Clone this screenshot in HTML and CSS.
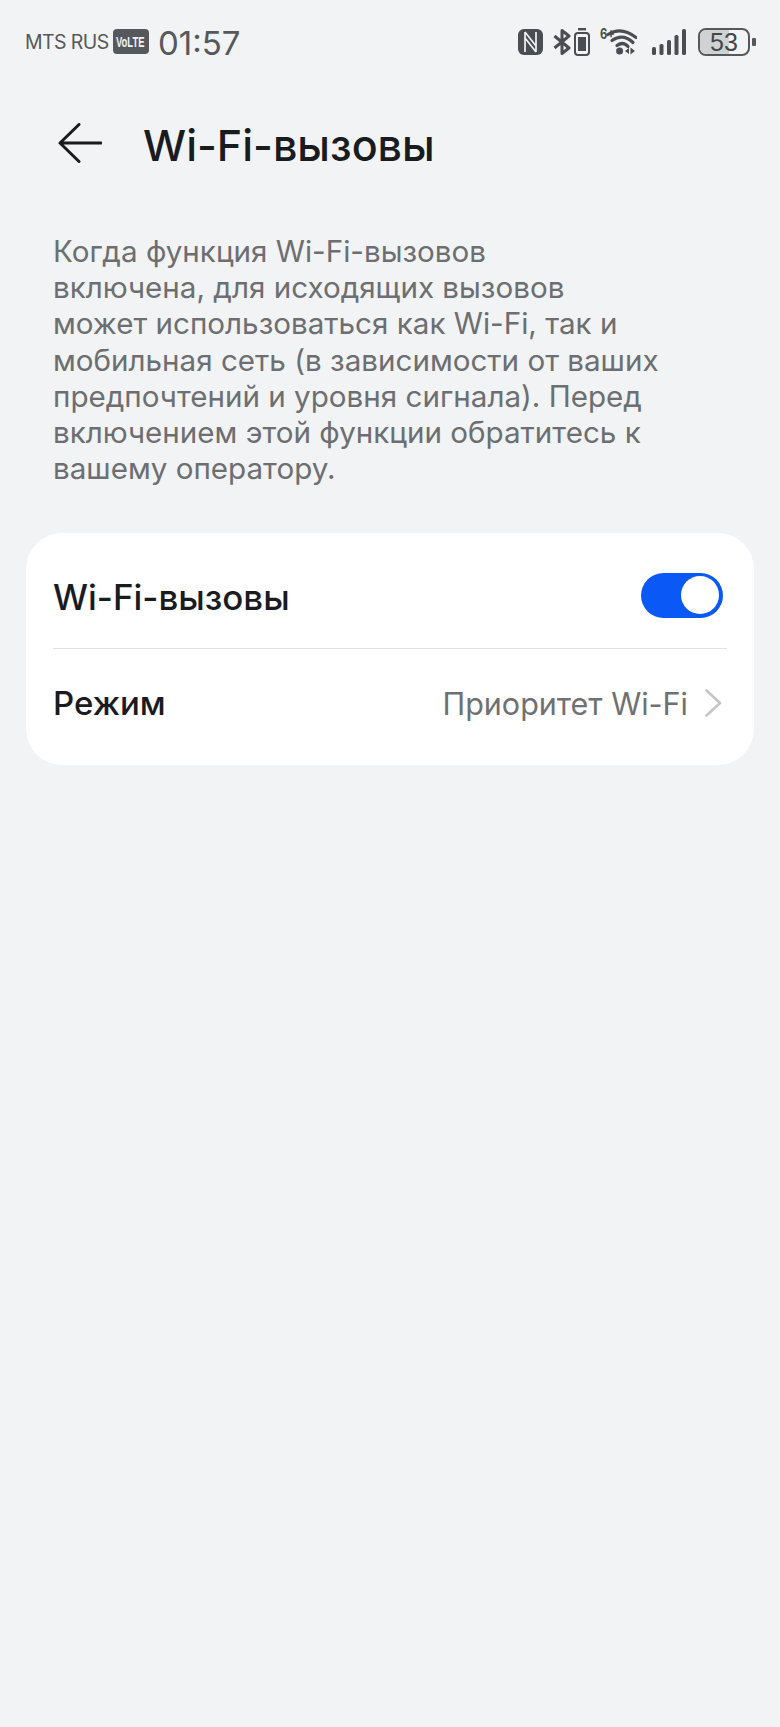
FILE: index.html
```html
<!DOCTYPE html>
<html lang="ru">
<head>
    <meta charset="UTF-8">
    <meta name="viewport" content="width=device-width, initial-scale=1.0">
    <title>Wi-Fi-вызовы</title>
    <link rel="stylesheet" href="styles.css">
</head>
<body>
    <div class="statusbar">
        <div class="status-left">
            <span class="carrier">MTS RUS</span>
            <svg class="volte" width="36" height="25" viewBox="0 0 36 25">
                <rect width="36" height="25" rx="4" fill="#55585c"/>
                <text class="volte-text" transform="translate(3 18) scale(0.63 1)">VoLTE</text>
            </svg>
            <span class="clock">01:57</span>
        </div>
        <div class="status-right">
            <!-- nfc -->
            <svg class="ic-nfc" width="25" height="26" viewBox="0 0 25 26">
                <rect width="25" height="26" rx="6" fill="#4a4d51"/>
                <path d="M7 3V23M18 3V23M7 3L18 17M7 9L18 23" fill="none" stroke="#f1f3f5" stroke-width="1.7"/>
            </svg>
            <!-- bluetooth -->
            <svg class="ic-bt" width="18" height="26" viewBox="0 0 18 26">
                <path d="M1.5 7L16 19L9 24.5V1.5L16 7L1.5 19" fill="none" stroke="#4a4d51" stroke-width="3" stroke-linejoin="round"/>
            </svg>
            <!-- headset battery -->
            <svg class="ic-bud" width="16" height="28" viewBox="0 0 16 28">
                <rect x="4" y="0" width="8" height="2.4" fill="#4a4d51"/>
                <rect x="1" y="5" width="14" height="22" rx="3" fill="none" stroke="#4a4d51" stroke-width="2"/>
                <rect x="4" y="9" width="8" height="14" fill="#4a4d51"/>
            </svg>
            <!-- wifi 6+ -->
            <svg class="ic-wifi" width="37" height="32" viewBox="0 -2 37 32">
                <text class="wifi-six" transform="translate(0 11) scale(0.8 1)">6+</text>
                <path d="M8 6.500Q21 -2 36 9.500" fill="none" stroke="#4a4d51" stroke-width="3.200" stroke-linecap="round"/>
                <path d="M12 12.500Q23 5 33 14.500" fill="none" stroke="#4a4d51" stroke-width="3.200" stroke-linecap="round"/>
                <path d="M17 17.500Q23 13 28 18.500" fill="none" stroke="#4a4d51" stroke-width="3.200" stroke-linecap="round"/>
                <circle cx="19.600" cy="23" r="3.500" fill="#4a4d51"/>
                <path d="M25 23L29 20V26ZM30.500 19.500V26.500L35 23Z" fill="#4a4d51"/>
            </svg>
            <!-- signal -->
            <svg class="ic-signal" width="34" height="26" viewBox="0 0 34 26" fill="#4a4d51">
                <rect x="0" y="18" width="4" height="8" rx="1.6"/>
                <rect x="7.5" y="15" width="4" height="11" rx="1.6"/>
                <rect x="15" y="11" width="4" height="15" rx="1.6"/>
                <rect x="22.5" y="6" width="4" height="20" rx="1.6"/>
                <rect x="30" y="0" width="4" height="26" rx="1.6"/>
            </svg>
            <div class="battery">
                <div class="battery-body"><div class="battery-fill"></div><span class="battery-num">53</span></div>
                <div class="battery-nub"></div>
            </div>
        </div>
    </div>

    <div class="header">
        <svg class="back" width="44" height="40" viewBox="0 0 44 40">
            <path d="M21 1.5L2 20L21 38.5M2 20H43" fill="none" stroke="#191b1e" stroke-width="3" stroke-linecap="round" stroke-linejoin="round"/>
        </svg>
        <h1 class="title">Wi-Fi-вызовы</h1>
    </div>

    <p class="desc">Когда функция Wi-Fi-вызовов<br>включена, для исходящих вызовов<br>может использоваться как Wi-Fi, так и<br>мобильная сеть (в зависимости от ваших<br>предпочтений и уровня сигнала). Перед<br>включением этой функции обратитесь к<br>вашему оператору.</p>

    <div class="card">
        <div class="row row-top">
            <span class="row-label">Wi-Fi-вызовы</span>
            <div class="toggle"><div class="knob"></div></div>
        </div>
        <div class="divider"></div>
        <div class="row row-bottom">
            <span class="row-label">Режим</span>
            <div class="row-value">
                <span>Приоритет Wi-Fi</span>
                <svg class="chevron" width="17" height="28" viewBox="0 0 17 28">
                    <path d="M1.5 1.5L15 14L1.5 26.5" fill="none" stroke="#c4c5c7" stroke-width="2.6" stroke-linecap="round" stroke-linejoin="round"/>
                </svg>
            </div>
        </div>
    </div>
</body>
</html>
```

FILE: styles.css
```css
html, body {
    margin: 0;
    padding: 0;
}
body {
    width: 780px;
    min-height: 1727px;
    background-color: #f1f3f5;
    font-family: Inter, "Noto Sans", sans-serif;
    color: #191b1e;
    overflow: hidden;
}
.statusbar {
    height: 83px;
    display: flex;
    justify-content: space-between;
    align-items: center;
    padding: 0 24px 0 25px;
    box-sizing: border-box;
    color: #55585c;
}
.status-left { display: flex; align-items: center; }
.carrier { font-size: 19.5px; letter-spacing: -0.6px; width: 88px; white-space: nowrap; }
.volte-text {
    font-family: "Liberation Sans", sans-serif;
    font-size: 15px;
    font-weight: bold;
    fill: #f1f3f5;
}
.clock { font-size: 33px; margin-left: 9px; line-height: 36px; padding-top: 2px; }
.status-right { display: flex; align-items: center; }
.ic-bt { margin-left: 10px; }
.ic-bud { margin-left: 3px; }
.ic-wifi { margin-left: 10px; }
.ic-signal { margin-left: 15px; }
.wifi-six { font-size: 14px; font-weight: bold; fill: #4a4d51; }
.battery { display: flex; align-items: center; margin-left: 12px; }
.battery-body {
    position: relative;
    width: 52px;
    height: 28px;
    box-sizing: border-box;
    border: 2px solid #55585c;
    border-radius: 8px;
    overflow: hidden;
    text-align: center;
}
.battery-fill {
    position: absolute;
    left: 0;
    top: 0;
    bottom: 0;
    width: 60%;
    background-color: #cfd1d3;
}
.battery-num {
    position: relative;
    font-family: "Liberation Sans", sans-serif;
    font-size: 25px;
    line-height: 24px;
    color: #44474a;
    display: block;
}
.battery-nub {
    width: 4px;
    height: 8px;
    margin-left: 2px;
    background-color: #55585c;
    border-radius: 1px;
}
.header {
    height: 40px;
    margin-top: 40px;
    display: flex;
    align-items: center;
    padding-left: 58px;
}
.title {
    margin: 4px 0 0 41px;
    font-size: 43px;
    font-weight: 450;
    line-height: 40px;
    white-space: nowrap;
}
.desc {
    margin: 70px 0 0 0;
    padding: 0 53px;
    font-size: 29.6px;
    line-height: 36.2px;
    color: #6c6e71;
    white-space: nowrap;
}
.card {
    margin: 47px 26px 0 26px;
    height: 232px;
    background-color: #fff;
    border-radius: 36px;
    padding: 0 27px;
    box-sizing: border-box;
}
.row {
    display: flex;
    justify-content: space-between;
    align-items: center;
    box-sizing: border-box;
}
.row-top { height: 115px; padding: 9px 4px 0 0; }
.row-bottom { height: 116px; padding: 0 5px 8px 0; }
.divider { height: 1px; background-color: #e1e2e3; }
.row-label { font-size: 33px; font-weight: 450; }
.row-top .row-label { font-size: 34.9px; margin-top: 4px; }
.toggle {
    width: 82px;
    height: 45px;
    background-color: #0a59f7;
    border-radius: 23px;
    display: flex;
    justify-content: flex-end;
    align-items: center;
    padding-right: 4px;
    box-sizing: border-box;
}
.knob {
    width: 38px;
    height: 38px;
    background-color: #fff;
    border-radius: 50%;
}
.row-value {
    display: flex;
    align-items: center;
    color: #6f7072;
    font-size: 30.5px;
}
.chevron { margin-left: 17px; }
```
